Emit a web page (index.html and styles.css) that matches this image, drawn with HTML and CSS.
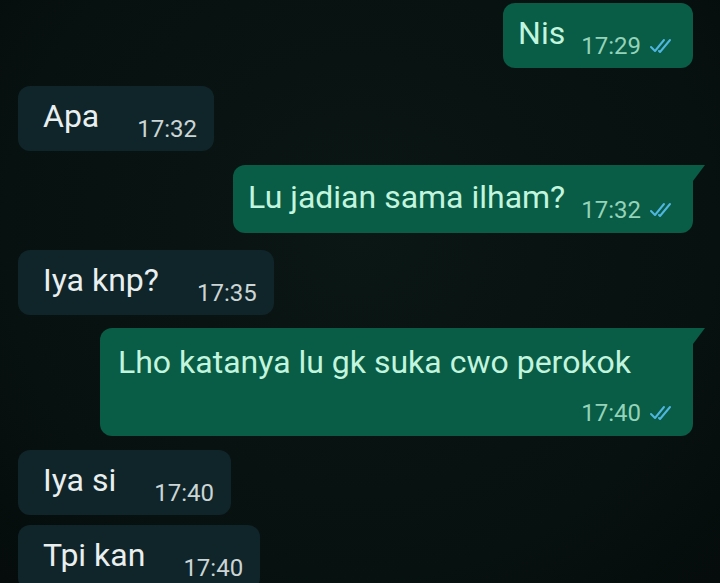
FILE: index.html
```html
<!DOCTYPE html>
<html>
<head>
<meta charset="utf-8">
<link rel="stylesheet" href="styles.css">
</head>
<body>
<div class="chat">
  <div class="row out">
    <div class="bubble">
      <span class="text">Nis</span>
      <span class="meta"><span class="time">17:29</span><svg class="ticks" viewBox="0 0 28 18"><path d="M2 10 L6 14 L15 3"/><path d="M10 14 L11 15 L21 3"/></svg></span>
    </div>
  </div>
  <div class="row in g18">
    <div class="bubble">
      <span class="text">Apa</span>
      <span class="meta"><span class="time">17:32</span></span>
    </div>
  </div>
  <div class="row out g14">
    <div class="bubble tail tall">
      <span class="text">Lu jadian sama ilham?</span>
      <span class="meta"><span class="time">17:32</span><svg class="ticks" viewBox="0 0 28 18"><path d="M2 10 L6 14 L15 3"/><path d="M10 14 L11 15 L21 3"/></svg></span>
    </div>
  </div>
  <div class="row in g17">
    <div class="bubble">
      <span class="text">Iya knp?</span>
      <span class="meta"><span class="time">17:35</span></span>
    </div>
  </div>
  <div class="row out g13">
    <div class="bubble tail block">
      <span class="text">Lho katanya lu gk suka cwo perokok</span>
      <span class="meta"><span class="time">17:40</span><svg class="ticks" viewBox="0 0 28 18"><path d="M2 10 L6 14 L15 3"/><path d="M10 14 L11 15 L21 3"/></svg></span>
    </div>
  </div>
  <div class="row in g14">
    <div class="bubble">
      <span class="text">Iya si</span>
      <span class="meta"><span class="time">17:40</span></span>
    </div>
  </div>
  <div class="row in g10">
    <div class="bubble">
      <span class="text">Tpi kan</span>
      <span class="meta"><span class="time">17:40</span></span>
    </div>
  </div>
</div>
</body>
</html>
```

FILE: styles.css
```css
html, body {
  margin: 0;
  padding: 0;
}
body {
  width: 720px;
  height: 583px;
  overflow: hidden;
  background: radial-gradient(ellipse at 50% 40%, #0b1715 0%, #07110f 70%, #050c0b 100%);
  font-family: Roboto, "Noto Sans", "Liberation Sans", sans-serif;
}
.chat {
  display: flex;
  flex-direction: column;
  padding: 3px 27px 0 18px;
}
.row {
  display: flex;
}
.row.out {
  justify-content: flex-end;
}
.g10 { margin-top: 10px; }
.g13 { margin-top: 13px; }
.g14 { margin-top: 14px; }
.g17 { margin-top: 17px; }
.g18 { margin-top: 18px; }

.bubble {
  position: relative;
  display: flex;
  align-items: flex-end;
  border-radius: 12px;
  padding: 12px 16px 9px 15px;
  box-sizing: border-box;
}
.bubble.tall {
  padding-top: 14px;
  padding-bottom: 10px;
}
.out .bubble {
  background: #095c45;
  color: #c2f5de;
}
.in .bubble {
  background: #10252a;
  color: #e9efef;
  padding-left: 25px;
  padding-right: 17px;
}
.bubble.tail {
  border-top-right-radius: 0;
}
.bubble.tail::after {
  content: "";
  position: absolute;
  top: 0;
  right: -12px;
  border-top: 16px solid #095c45;
  border-right: 12px solid transparent;
}
.bubble.block {
  flex-direction: column;
  width: 593px;
  padding: 16px 16px 10px 18px;
}
.bubble.block .text {
  align-self: flex-start;
  margin-bottom: 0;
}
.bubble.block .meta {
  margin-top: 20px;
}
.text {
  font-size: 32px;
  line-height: 36px;
  margin-bottom: 8px;
  white-space: nowrap;
}
.meta {
  display: flex;
  align-items: center;
  margin-left: 16px;
}
.in .meta {
  margin-left: 38px;
}
.time {
  font-size: 24px;
  line-height: 26px;
}
.out .time {
  color: #93d3b9;
}
.in .time {
  color: #cbd5d5;
}
.ticks {
  width: 28px;
  height: 18px;
  margin-left: 8px;
  fill: none;
  stroke: #4fb6df;
  stroke-width: 2;
  stroke-linecap: round;
  stroke-linejoin: round;
}
```
